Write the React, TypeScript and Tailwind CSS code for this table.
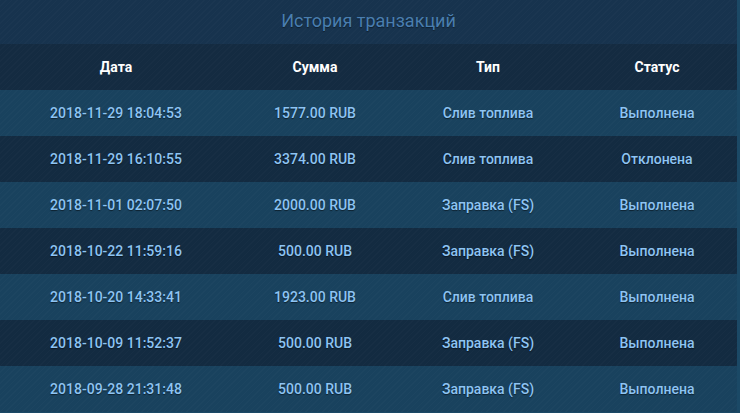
// Transaction history table

const rows = [
  { date: "2018-11-29 18:04:53", sum: "1577.00 RUB", type: "Слив топлива", status: "Выполнена" },
  { date: "2018-11-29 16:10:55", sum: "3374.00 RUB", type: "Слив топлива", status: "Отклонена" },
  { date: "2018-11-01 02:07:50", sum: "2000.00 RUB", type: "Заправка (FS)", status: "Выполнена" },
  { date: "2018-10-22 11:59:16", sum: "500.00 RUB", type: "Заправка (FS)", status: "Выполнена" },
  { date: "2018-10-20 14:33:41", sum: "1923.00 RUB", type: "Слив топлива", status: "Выполнена" },
  { date: "2018-10-09 11:52:37", sum: "500.00 RUB", type: "Заправка (FS)", status: "Выполнена" },
  { date: "2018-09-28 21:31:48", sum: "500.00 RUB", type: "Заправка (FS)", status: "Выполнена" },
];

const cols = "grid grid-cols-[232px_166px_180px_158px] items-center h-[46px]";
const stripes =
  "bg-[image:repeating-linear-gradient(135deg,rgba(255,255,255,0.015)_0px,rgba(255,255,255,0.015)_1px,transparent_1px,transparent_4px)]";

export default function App() {
  return (
    <div
      className="w-[740px] h-[413px] overflow-hidden flex bg-[#1b4966]"
      style={{ fontFamily: "Roboto, 'Liberation Sans', sans-serif" }}
    >
      <div className="w-[737px] flex flex-col">
        {/* Title */}
        <div className={`h-[44px] flex items-center justify-center pb-1 bg-[#17334e] ${stripes}`}>
          <h2 className="text-[18px] text-[#4a7eaf] [text-shadow:0_1px_1px_rgba(0,0,0,0.4)]">
            История транзакций
          </h2>
        </div>

        {/* Header */}
        <div className={`${cols} bg-[#142b41] ${stripes} text-white font-bold text-[14px] text-center`}>
          <div>Дата</div>
          <div>Сумма</div>
          <div>Тип</div>
          <div>Статус</div>
        </div>

        {rows.map((r, i) => (
          <div
            key={i}
            className={`${cols} ${i % 2 === 0 ? "bg-[#19425e]" : "bg-[#132b41]"} ${stripes} text-[#8ec4f3] font-medium text-[14px] text-center [text-shadow:0_1px_1px_rgba(0,0,0,0.5)]`}
          >
            <div>{r.date}</div>
            <div>{r.sum}</div>
            <div>{r.type}</div>
            <div>{r.status}</div>
          </div>
        ))}
      </div>
    </div>
  );
}
